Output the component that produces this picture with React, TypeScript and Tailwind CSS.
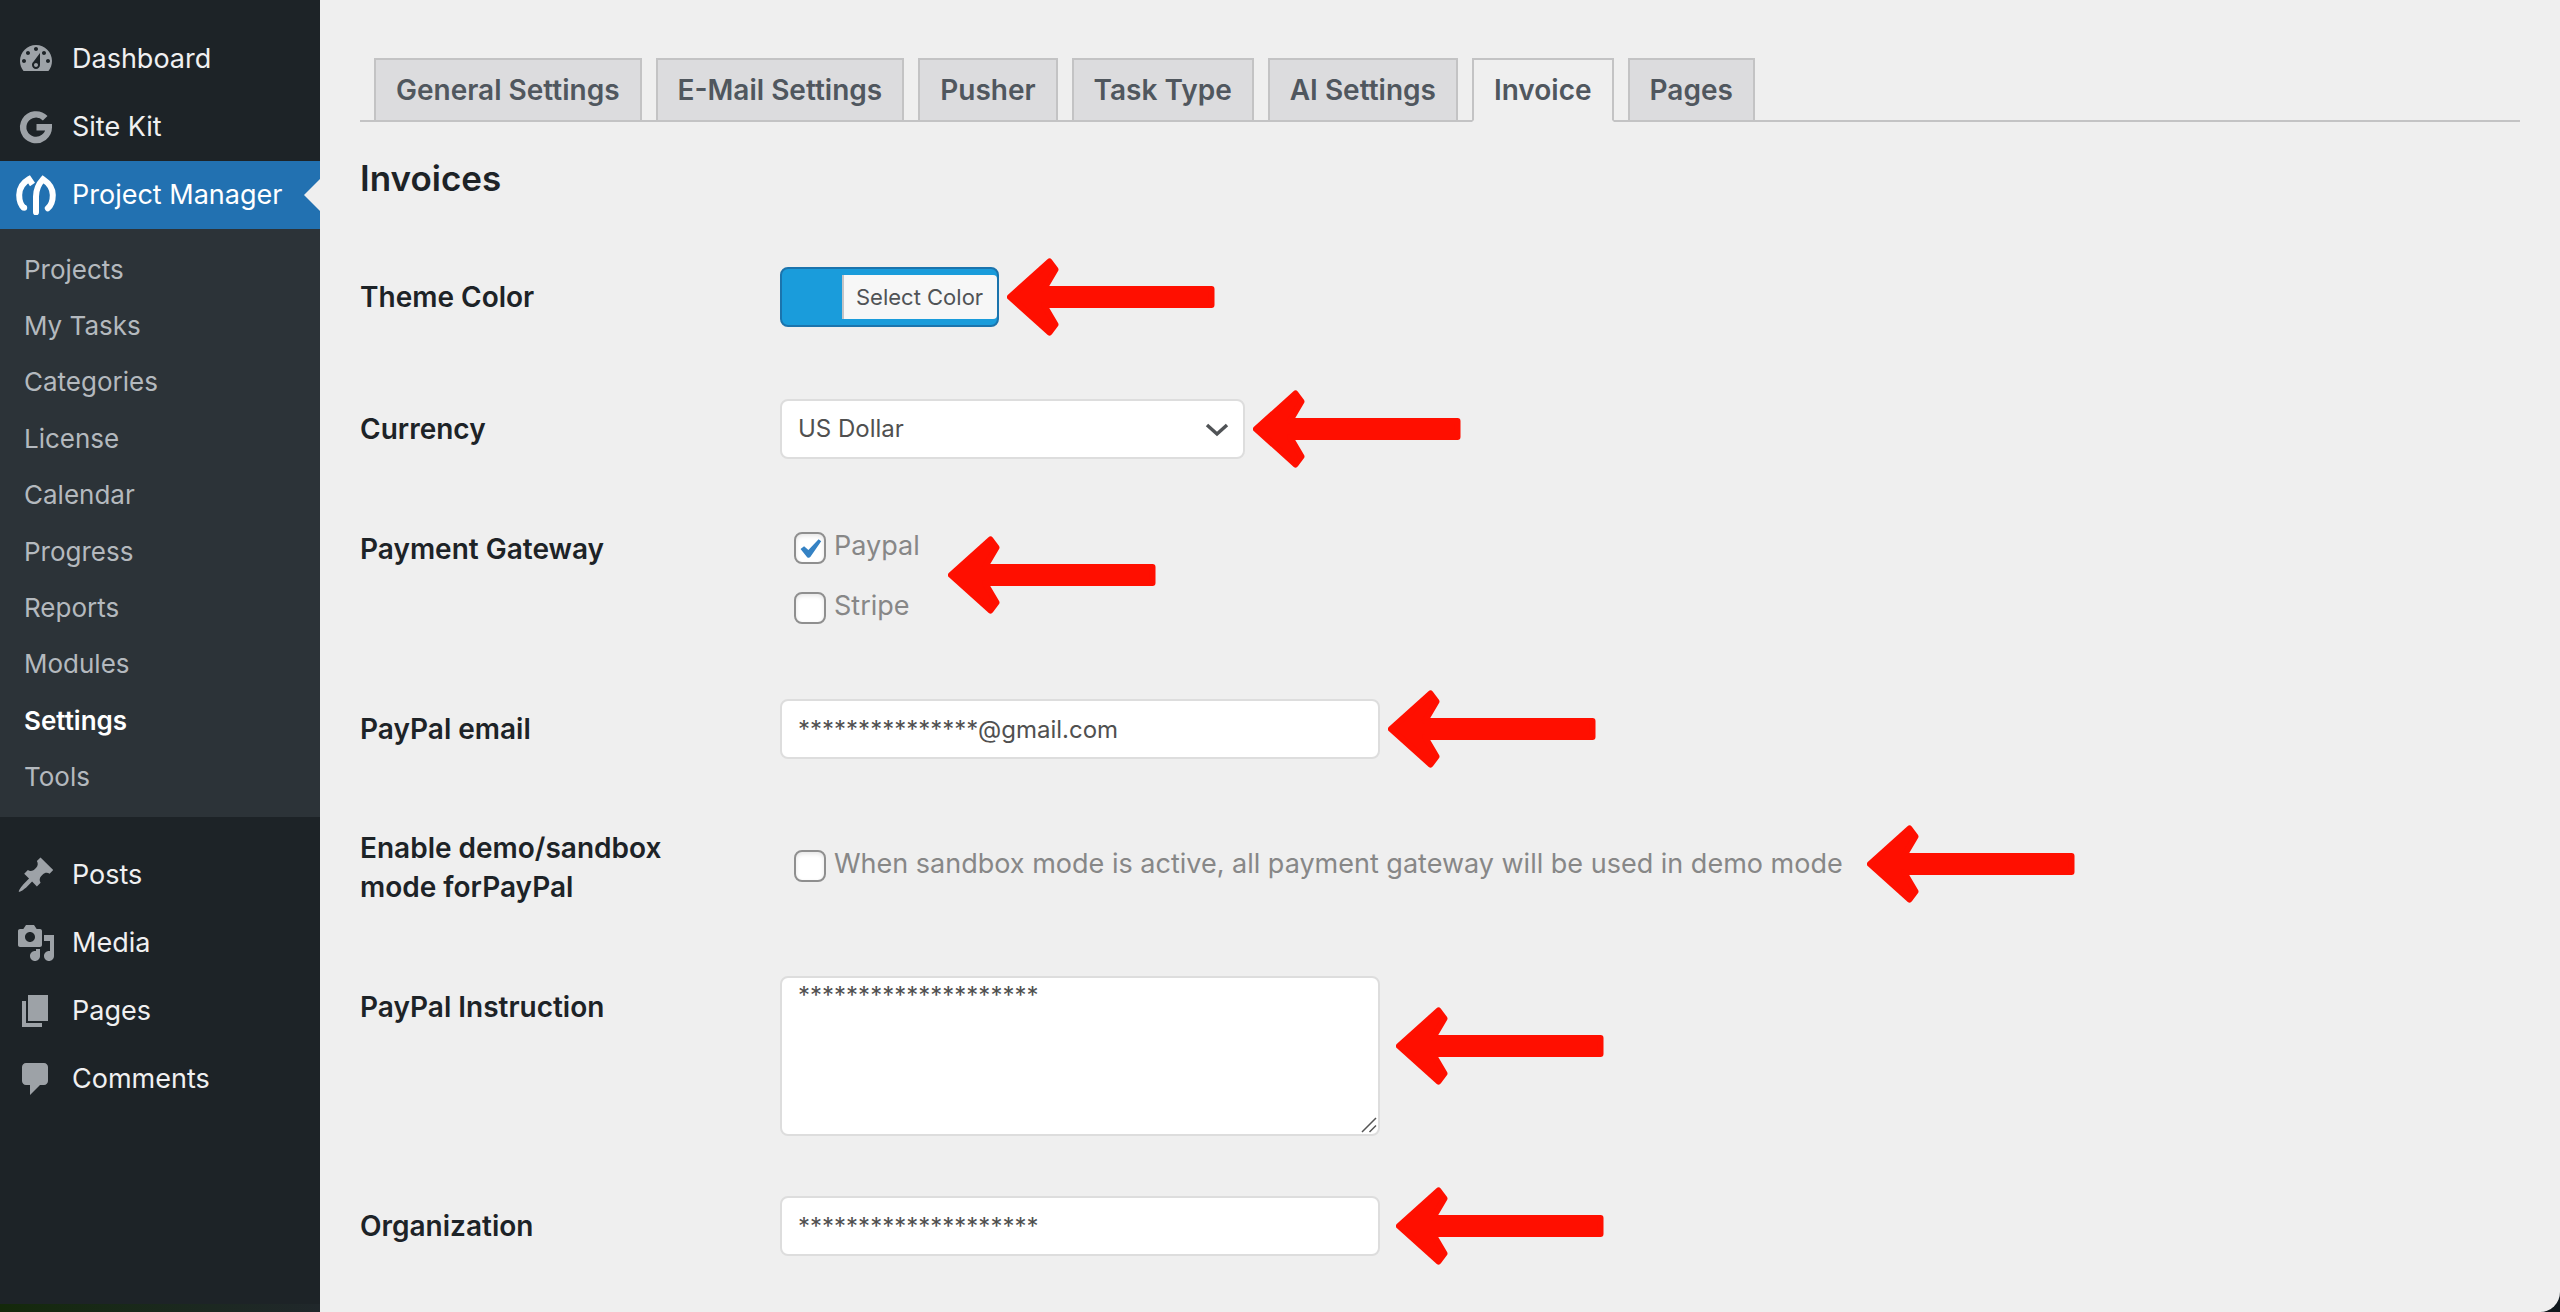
import type { ReactNode } from "react";

const sidebarTop = [
  { label: "Dashboard", icon: <DashboardIcon /> },
  { label: "Site Kit", icon: <SiteKitIcon /> },
];

const submenu = [
  "Projects",
  "My Tasks",
  "Categories",
  "License",
  "Calendar",
  "Progress",
  "Reports",
  "Modules",
  "Settings",
  "Tools",
];

const sidebarBottom = [
  {
    label: "Posts",
    icon: (
      <Dashicon d="M10.44 3.02l1.82-1.82 6.36 6.35-1.83 1.82c-1.05-.68-2.48-.57-3.41.36l-.75.75c-.92.93-1.04 2.35-.35 3.41l-1.83 1.82-2.41-2.41-2.8 2.79c-.42.42-3.38 2.71-3.8 2.29s1.86-3.39 2.28-3.81l2.79-2.79L4.1 9.36l1.83-1.82c1.05.69 2.48.57 3.4-.36l.75-.75c.93-.92 1.05-2.35.36-3.41z" />
    ),
  },
  {
    label: "Media",
    icon: (
      <Dashicon d="M13 11V4c0-.55-.45-1-1-1h-1.67L9 1H5L3.67 3H2c-.55 0-1 .45-1 1v7c0 .55.45 1 1 1h10c.55 0 1-.45 1-1zM7 4.5c1.38 0 2.5 1.12 2.5 2.5S8.38 9.5 7 9.5 4.5 8.38 4.5 7 5.62 4.5 7 4.5zM14 6h5v10.5c0 1.38-1.12 2.5-2.5 2.5S14 17.88 14 16.5s1.12-2.5 2.5-2.5c.17 0 .34.02.5.05V9h-3V6zm-4 8.05V13h2v3.5c0 1.38-1.12 2.5-2.5 2.5S7 17.88 7 16.5 8.12 14 9.5 14c.17 0 .34.02.5.05z" />
    ),
  },
  { label: "Pages", icon: <Dashicon d="M6 15V2h10v13H6zm-1 1h8v2H3V5h2v11z" /> },
  {
    label: "Comments",
    icon: (
      <Dashicon d="M5 2h9c1.1 0 2 .9 2 2v7c0 1.1-.9 2-2 2h-2l-5 5v-5H5c-1.1 0-2-.9-2-2V4c0-1.1.9-2 2-2z" />
    ),
  },
];

const tabs = [
  "General Settings",
  "E-Mail Settings",
  "Pusher",
  "Task Type",
  "AI Settings",
  "Invoice",
  "Pages",
];

function Dashicon({ d }: { d: string }) {
  return (
    <svg viewBox="0 0 20 20" className="size-10 fill-[#9da2a7]" fillRule="evenodd" aria-hidden="true">
      <path d={d} />
    </svg>
  );
}

function DashboardIcon() {
  return (
    <Dashicon d="M3.76 16h12.48c1.1-1.37 1.76-3.11 1.76-5 0-4.42-3.58-8-8-8s-8 3.58-8 8c0 1.89.66 3.63 1.76 5zM10 4c.55 0 1 .45 1 1s-.45 1-1 1-1-.45-1-1 .45-1 1-1zM6 6c.55 0 1 .45 1 1s-.45 1-1 1-1-.45-1-1 .45-1 1-1zm8 0c.55 0 1 .45 1 1s-.45 1-1 1-1-.45-1-1 .45-1 1-1zm-5.37 5.55L12 7v6c0 1.1-.9 2-2 2s-2-.9-2-2c0-.57.24-1.08.63-1.45zM4 10c.55 0 1 .45 1 1s-.45 1-1 1-1-.45-1-1 .45-1 1-1zm12 0c.55 0 1 .45 1 1s-.45 1-1 1-1-.45-1-1 .45-1 1-1zm-5 3c0-.55-.45-1-1-1s-1 .45-1 1 .45 1 1 1 1-.45 1-1z" />
  );
}

function SiteKitIcon() {
  return (
    <svg viewBox="0 0 40 40" className="size-10" fill="none" aria-hidden="true">
      <path d="M29.2 11.3A12.8 12.8 0 1 0 32.8 20.2H20.5" stroke="#9da2a7" strokeWidth="6.4" />
    </svg>
  );
}

function ProjectManagerIcon() {
  return (
    <svg viewBox="0 0 40 40" className="size-10" fill="none" stroke="#fff" strokeWidth="6" aria-hidden="true">
      <path d="M16.5 9.5L13 4.2C6.500 8 3.200 13.500 3.200 20C3.200 26 5 30.500 8.200 33.200" strokeLinecap="butt" />
      <path d="M20 37.300V21.500C20 14 23 8.500 27 4.200C33.500 8.500 36.800 13.500 36.800 20C36.800 26 35 30.500 31.800 33.200" strokeLinecap="round" />
      <circle cx="8.200" cy="32.800" r="3" fill="#fff" stroke="none" />
    </svg>
  );
}

function Arrow({ className = "" }: { className?: string }) {
  return (
    <svg viewBox="0 0 208 78" className={`h-[78px] w-[208px] shrink-0 ${className}`} aria-hidden="true">
      <path
        d="M3 39L42.500 3.500L48.500 11.500L37 31H204.500V47H37L48.500 66.500L42.500 74.500Z"
        fill="#ff0f00"
        stroke="#ff0f00"
        strokeWidth="6"
        strokeLinejoin="round"
      />
    </svg>
  );
}

function MenuItem({ label, icon }: { label: string; icon: ReactNode }) {
  return (
    <li>
      <a href="#" className="flex h-[68px] items-center gap-4 pl-4 text-[#f0f0f1]">
        {icon}
        {label}
      </a>
    </li>
  );
}

function Check({ id, label, checked = false }: { id: string; label: string; checked?: boolean }) {
  return (
    <div className="flex h-8 items-center gap-2 pl-[14px]">
      <span className="relative flex size-8 shrink-0">
        <input
          id={id}
          type="checkbox"
          defaultChecked={checked}
          className="peer size-8 appearance-none rounded-lg border-2 border-[#8f8f8f] bg-white shadow-[inset_0_2px_4px_rgba(0,0,0,0.1)]"
        />
        <svg
          viewBox="0 0 20 20"
          className="pointer-events-none absolute inset-0 hidden size-8 fill-[#3582c4] peer-checked:block"
          aria-hidden="true"
        >
          <path d="M15.400 4.500L17 5.800L10.300 15.500Q9.200 16.700 8.100 15.600L4.100 10.700L6.300 8.900L9 11.300Z" />
        </svg>
      </span>
      <label htmlFor={id} className="-mt-1 leading-8 text-[#878787]">
        {label}
      </label>
    </div>
  );
}

const labelClass = "w-[420px] shrink-0 pr-24 text-[28px] font-semibold text-[#1d2327]";
const fieldClass = "rounded-lg border-2 border-[#dddddd] bg-white px-4 text-2xl text-[#505050]";

export default function App() {
  return (
    <div className="flex min-h-screen bg-[#10181d] font-[Inter,'Liberation_Sans',sans-serif] text-[27px]">
      <aside className="flex w-80 shrink-0 flex-col bg-[#1d2327] pt-[25px]">
        <nav aria-label="Admin menu" className="grow">
          <ul>
            {sidebarTop.map((item) => (
              <MenuItem key={item.label} {...item} />
            ))}
            <li>
              <a href="#" className="relative flex h-[68px] items-center gap-4 bg-[#2271b1] pl-4 text-white">
                <ProjectManagerIcon />
                Project Manager
                <svg viewBox="0 0 16 32" className="absolute top-[18px] right-0 h-8 w-4 fill-[#efefef]" aria-hidden="true">
                  <path d="M16 0L0 16L16 32Z" />
                </svg>
              </a>
              <ul className="grid min-h-[588px] auto-rows-fr bg-[#2c3338] py-3 text-[26px]">
                {submenu.map((label) => (
                  <li key={label} className="flex items-center pl-6">
                    <a
                      href="#"
                      className={label === "Settings" ? "font-semibold text-white" : "text-[#b4b9be]"}
                    >
                      {label}
                    </a>
                  </li>
                ))}
              </ul>
            </li>
          </ul>
          <ul className="mt-6">
            {sidebarBottom.map((item) => (
              <MenuItem key={item.label} {...item} />
            ))}
          </ul>
        </nav>
        <div className="h-2 bg-linear-to-r from-[#14290a] to-[#20272b]" />
      </aside>

      <main className="min-w-0 grow rounded-br-[20px] bg-[#efefef] px-10 pt-[58px]">
        <nav aria-label="Settings sections" className="flex gap-[14px] border-b-2 border-[#c3c3c4] pl-[14px]">
          {tabs.map((tab) => (
            <a
              key={tab}
              href="#"
              aria-current={tab === "Invoice" ? "page" : undefined}
              className={
                tab === "Invoice"
                  ? "-mb-[2px] border-2 border-[#c3c3c4] border-b-[#efefef] bg-[#efefef] px-5 py-1.5 text-[28px] leading-[48px] font-semibold text-[#50575e]"
                  : "border-2 border-b-0 border-[#c3c3c4] bg-[#dcdcde] px-5 py-1.5 text-[28px] leading-[48px] font-semibold text-[#50575e]"
              }
            >
              {tab}
            </a>
          ))}
        </nav>

        <h2 className="mt-9 text-[35px] leading-10 font-semibold text-[#1d2327]">Invoices</h2>

        <form>
          <div className="mt-[60px] flex h-[78px] items-center">
            <label htmlFor="theme-color" className={labelClass}>
              Theme Color
            </label>
            <button
              id="theme-color"
              type="button"
              className="flex h-[60px] items-center rounded-lg border-2 border-[#1b74ad] bg-[#1a9cdb] pl-[60px] text-[22px] text-[#505356]"
            >
              <span className="rounded-r-[4px] border-l-2 border-[#c3c4c7] bg-[#f7f7f7] pr-[14px] pl-3 leading-[44px]">
                Select Color
              </span>
            </button>
            <Arrow className="ml-2" />
          </div>

          <div className="mt-[54px] flex h-[78px] items-center">
            <label htmlFor="currency" className={labelClass}>
              Currency
            </label>
            <span className="relative">
              <select id="currency" className={`block h-[60px] w-[465px] appearance-none ${fieldClass}`}>
                <option>US Dollar</option>
              </select>
              <svg
                viewBox="0 0 24 14"
                className="pointer-events-none absolute top-[24px] right-4 h-[14px] w-6"
                fill="none"
                stroke="#505356"
                strokeWidth="3.500"
                aria-hidden="true"
              >
                <path d="M2 2L12 11L22 2" />
              </svg>
            </span>
            <Arrow className="ml-2" />
          </div>

          <div className="mt-16 flex h-[92px] items-start">
            <span className={`${labelClass} leading-[34px]`}>Payment Gateway</span>
            <div className="flex flex-col gap-7">
              <Check id="paypal" label="Paypal" checked />
              <Check id="stripe" label="Stripe" />
            </div>
            <Arrow className="mt-1 ml-7" />
          </div>

          <div className="mt-[66px] flex h-[78px] items-center">
            <label htmlFor="paypal-email" className={labelClass}>
              PayPal email
            </label>
            <input
              id="paypal-email"
              type="text"
              defaultValue="***************@gmail.com"
              className={`h-[60px] w-[600px] ${fieldClass}`}
            />
            <Arrow className="ml-2" />
          </div>

          <div className="mt-[57px] flex h-[82px]">
            <span className={`${labelClass} pt-1 leading-[39px]`}>Enable demo/sandbox mode forPayPal</span>
            <div className="pt-[25px]">
              <Check
                id="sandbox"
                label="When sandbox mode is active, all payment gateway will be used in demo mode"
              />
            </div>
            <Arrow className="ml-6" />
          </div>

          <div className="mt-[69px] flex h-40 items-center">
            <label htmlFor="paypal-instruction" className={`${labelClass} self-start pt-3 leading-[39px]`}>
              PayPal Instruction
            </label>
            <span className="relative">
              <textarea
                id="paypal-instruction"
                defaultValue="********************"
                className={`block h-40 w-[600px] resize-none leading-[36px] ${fieldClass}`}
              />
              <svg
                viewBox="0 0 16 16"
                className="pointer-events-none absolute right-[3px] bottom-[3px] size-4"
                stroke="#555"
                strokeWidth="1.500"
                aria-hidden="true"
              >
                <path d="M1 15L15 1M8.500 15L15 8.500" />
              </svg>
            </span>
            <Arrow className="ml-4 mt-[-20px]" />
          </div>

          <div className="mt-[51px] flex h-[78px] items-center">
            <label htmlFor="organization" className={labelClass}>
              Organization
            </label>
            <input
              id="organization"
              type="text"
              defaultValue="********************"
              className={`h-[60px] w-[600px] ${fieldClass}`}
            />
            <Arrow className="ml-4" />
          </div>
        </form>
      </main>
    </div>
  );
}
